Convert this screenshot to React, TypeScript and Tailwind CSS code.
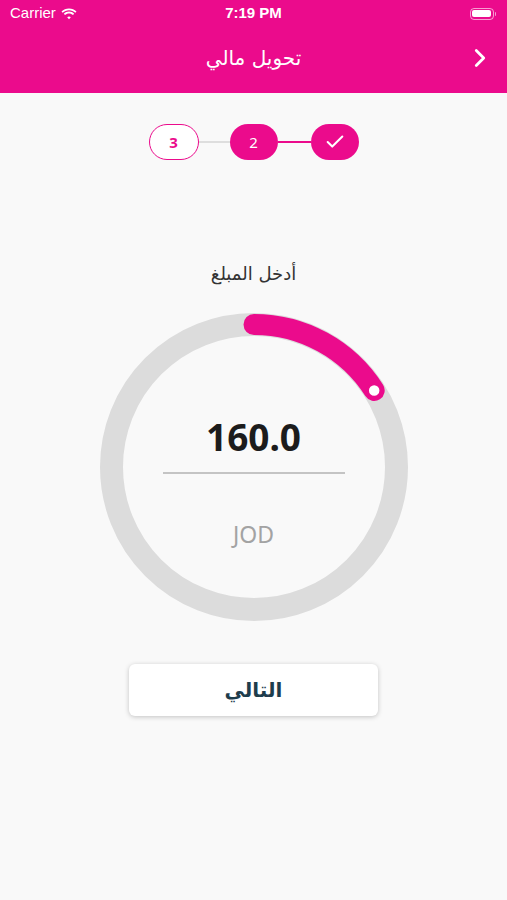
import { Check, ChevronRight } from "lucide-react"

const PINK = "#eb0b8c"

// arc of the amount ring, 0° = 12 o'clock
const R = 142.5
const C = 154
const ANGLE = 57.5
const rad = (ANGLE * Math.PI) / 180
const endX = C + R * Math.sin(rad)
const endY = C - R * Math.cos(rad)

function StatusBar() {
    return (
        <div className="relative flex items-center justify-between h-[27px] px-[10px] text-white text-[15px] font-['Liberation_Sans',sans-serif]">
            <div className="flex items-center gap-[5px]">
                <span>Carrier</span>
                <svg width="16" height="12" viewBox="0 0 16 12" fill="white">
                    <path d="M8 2.2c2.4 0 4.6.9 6.3 2.5l1.2-1.3C13.5 1.5 10.9.4 8 .4S2.5 1.5.5 3.4l1.2 1.3C3.4 3.1 5.6 2.2 8 2.2z" />
                    <path d="M8 5.4c1.5 0 2.9.6 4 1.6l1.2-1.3C11.8 4.4 10 3.6 8 3.6s-3.8.8-5.2 2.1L4 7c1.1-1 2.5-1.6 4-1.6z" />
                    <path d="M8 8.5c.7 0 1.3.3 1.8.7L8 11.2 6.2 9.2c.5-.4 1.1-.7 1.8-.7z" />
                </svg>
            </div>
            <span className="absolute left-1/2 -translate-x-1/2 font-bold">7:19 PM</span>
            <div className="flex items-center gap-[1px] pr-[1px]">
                <div className="w-[24px] h-[12px] rounded-[4px] border border-white/60 p-[1.5px]">
                    <div className="w-full h-full rounded-[2px] bg-white" />
                </div>
                <div className="w-[1.5px] h-[4px] rounded-r bg-white/60" />
            </div>
        </div>
    )
}

function Stepper() {
    return (
        <div className="flex items-center justify-center mt-[31px] font-['Noto_Sans',sans-serif]">
            <div className="w-[50px] h-[36px] rounded-full border-[1.5px] border-[#eb0b8c] bg-white flex items-center justify-center text-[#eb0b8c] text-[15px] font-bold">
                3
            </div>
            <div className="w-[31px] h-[2px] bg-[#dedede]" />
            <div className="w-[48px] h-[36px] rounded-full bg-[#eb0b8c] flex items-center justify-center text-white text-[15px]">
                2
            </div>
            <div className="w-[33px] h-[2px] bg-[#eb0b8c]" />
            <div className="w-[48px] h-[36px] rounded-full bg-[#eb0b8c] flex items-center justify-center text-white">
                <Check size={22} strokeWidth={2.2} />
            </div>
        </div>
    )
}

function AmountRing() {
    return (
        <div className="grid w-[308px] h-[308px] mt-[27px]">
            <svg width="308" height="308" viewBox="0 0 308 308" className="[grid-area:1/1]">
                <circle cx={C} cy={C} r={R} fill="none" stroke="#dcdcdc" strokeWidth="23" />
                <path
                    d={`M ${C} ${C - R} A ${R} ${R} 0 0 1 ${endX} ${endY}`}
                    fill="none"
                    stroke={PINK}
                    strokeWidth="21"
                    strokeLinecap="round"
                />
                <circle cx={endX} cy={endY} r="6.5" fill="white" stroke={PINK} strokeWidth="2.5" />
            </svg>
            <div className="[grid-area:1/1] flex flex-col items-center pt-[105px]">
                <span className="text-[37px] leading-none font-bold text-[#1c1c1c] font-['Noto_Sans',sans-serif]">160.0</span>
                <div className="w-[182px] h-[2px] bg-[#c4c4c4] mt-[17px]" />
                <span className="mt-[49px] text-[23px] leading-none text-[#a3a3a3] font-['Noto_Sans',sans-serif]">JOD</span>
            </div>
        </div>
    )
}

export default function App() {
    return (
        <div className="w-[507px] h-[900px] bg-[#f9f9f9] flex flex-col">
            {/* Header */}
            <div className="bg-[#eb0b8c] h-[93px] flex flex-col">
                <StatusBar />
                <div className="relative flex-1 flex items-center justify-center">
                    <span dir="rtl" className="text-white text-[20px] font-['DejaVu_Sans',sans-serif] -mt-[4px]">تحويل مالي</span>
                    <ChevronRight size={30} strokeWidth={2.2} className="absolute right-[12px] top-[16px] text-white" />
                </div>
            </div>

            <Stepper />

            <div className="flex flex-col items-center">
                <span dir="rtl" className="mt-[102px] text-[18px] leading-[24px] text-[#333333] font-['DejaVu_Sans',sans-serif]">
                    أدخل المبلغ
                </span>
                <AmountRing />
                <button className="mt-[43px] w-[249px] h-[52px] rounded-[6px] bg-white shadow-[0_1px_5px_rgba(0,0,0,0.22)] flex items-center justify-center">
                    <span dir="rtl" className="text-[20px] font-bold text-[#1e3d4c] font-['DejaVu_Sans',sans-serif]">التالي</span>
                </button>
            </div>
        </div>
    )
}
